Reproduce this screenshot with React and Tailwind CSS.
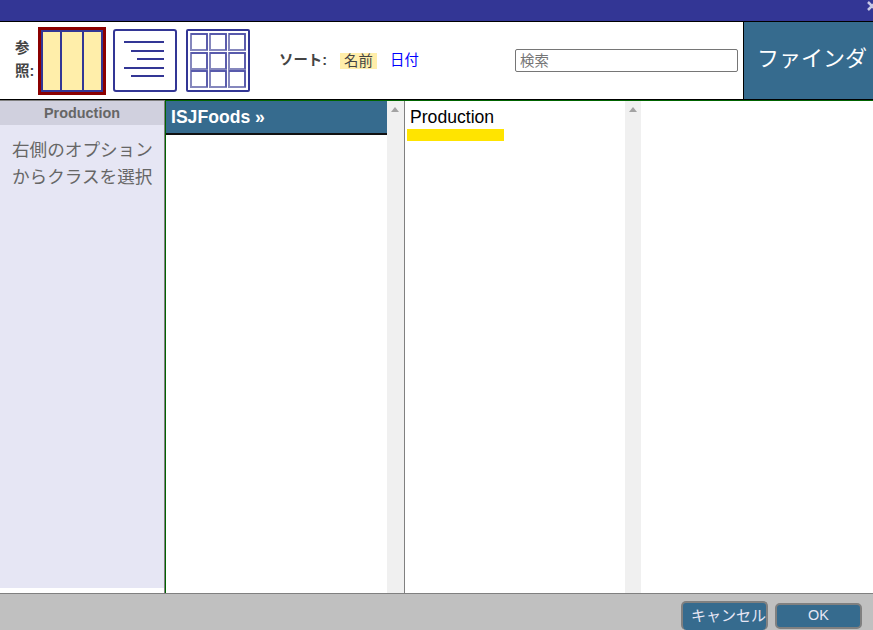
import React from "react";

function ColumnsIcon() {
  return (
    <div className="w-[68px] h-[68px] border-[3px] border-[#8b0000] bg-white shrink-0">
      <svg width="62" height="62" viewBox="0 0 62 62" className="block">
        <rect x="1" y="1" width="60" height="60" fill="#ffeeaa" stroke="#333695" strokeWidth="2" />
        <path d="M20 1V61M42 1V61" stroke="#333695" strokeWidth="2" fill="none" />
      </svg>
    </div>
  );
}

function ListIcon() {
  return (
    <svg width="64" height="64" viewBox="0 0 64 64" className="block shrink-0">
      <rect x="1" y="1" width="62" height="61" rx="2" fill="#fff" stroke="#333695" strokeWidth="2" />
      <path d="M11 13H51M18 22H51M24 30H51M11 39H51M18 47H51" stroke="#333695" strokeWidth="2" fill="none" />
    </svg>
  );
}

function GridIcon() {
  const xs = [4, 23, 42];
  const ys = [4, 23, 41];
  const cells = [];
  ys.forEach((y) => {
    xs.forEach((x) => {
      cells.push(
        <g key={x + "-" + y} fill="none" strokeWidth="2">
          <rect x={x + 1} y={y + 1} width="16" height="16" fill="#fff" stroke="#8587bd" />
          <path d={`M${x + 1} ${y + 1}H${x + 17}V${y + 17}`} stroke="#4a4ca6" strokeWidth="1.400" />
        </g>
      );
    });
  });
  return (
    <svg width="64" height="64" viewBox="0 0 64 64" className="block shrink-0">
      <rect x="1" y="1" width="62" height="61" rx="1" fill="#fff" stroke="#333695" strokeWidth="2" />
      {cells}
    </svg>
  );
}

function Scrollbar({ wide }) {
  return (
    <div className={wide ? "w-[17px] bg-[#f0f0f0] shrink-0 pl-1 pt-[6px]" : "w-4 bg-[#f0f0f0] shrink-0 pl-1 pt-[6px]"}>
      <div className="w-0 h-0 border-l-[4px] border-r-[4px] border-b-[5px] border-l-transparent border-r-transparent border-b-[#a3a3a3]"></div>
    </div>
  );
}

export default function App() {
  return (
    <div className="w-[873px] h-[630px] overflow-hidden flex flex-col bg-white font-['Liberation_Sans','Noto_Sans_CJK_JP',sans-serif]">
      <div className="h-[22px] shrink-0 bg-[#333695] border-b border-black flex justify-end overflow-hidden">
        <svg width="6" height="10" viewBox="0 0 6 10" className="block mt-[1px]">
          <path d="M1 1L9 9M9 1L1 9" stroke="#c9c9e6" strokeWidth="2.500" fill="none" />
        </svg>
      </div>

      <div className="h-[78px] shrink-0 flex items-center border-b border-black">
        <div className="w-[38px] pl-[15px] text-[14.400px] leading-[23px] font-bold text-[#444] text-left shrink-0 mt-[-2px]">
          参照:
        </div>
        <div className="flex items-center shrink-0 mt-px">
          <ColumnsIcon />
          <div className="ml-[7px]"><ListIcon /></div>
          <div className="ml-[9px]"><GridIcon /></div>
        </div>
        <div className="ml-[29px] w-[236px] flex items-center text-[14.400px] shrink-0 mt-px">
          <span className="font-bold text-[#444] w-[61px]">ソート:</span>
          <span className="bg-[#ffeeaa] text-[#444] h-4 leading-4 px-1 w-[37px] whitespace-nowrap">名前</span>
          <span className="ml-[13px] text-[#0000ff]">日付</span>
        </div>
        <input
          className="w-[223px] h-[23px] border border-[#767676] rounded-[2px] px-1 text-[14.400px] shrink-0 placeholder:text-[#757575]"
          placeholder="検索"
        />
        <div className="ml-[5px] w-[130px] h-full shrink-0 bg-[#366b8e] border-l border-black text-white text-[22px] pl-[13px] pb-1 flex items-center whitespace-nowrap">
          ファインダ
        </div>
      </div>

      <div className="flex-1 min-h-0 flex border-b border-b-[#808080]">
        <div className="w-[165px] shrink-0 flex flex-col pb-[5px] border-t border-r border-[#808080]">
          <div className="flex-1 bg-[#e6e6f4]">
            <div className="h-6 bg-[#d0d0de] text-center text-[14.400px] font-bold leading-6 text-[#666]">Production</div>
            <p className="pl-3 pr-1 pt-3 text-[17.600px] leading-[27px] text-[#666]">右側のオプション<br />からクラスを選択</p>
          </div>
        </div>
        <div className="flex-1 flex border-t border-l border-[#006400]">
          <div className="w-[221px] shrink-0">
            <div className="h-[34px] bg-[#366b8e] border-b-2 border-[#111] text-white font-bold text-[17.600px] leading-[32px] pl-[5px]">ISJFoods »</div>
          </div>
          <Scrollbar wide />
          <div className="w-[218px] shrink-0 pl-[2px] pt-[6px] border-l border-[#808080] box-content">
            <div className="pl-[3px] text-black text-[17.600px] leading-[21px]">Production</div>
            <div className="w-[97px] h-3 bg-[#ffe400] mt-[1px]"></div>
          </div>
          <Scrollbar />
          <div className="flex-1"></div>
        </div>
      </div>

      <div className="h-[36px] shrink-0 bg-[#c0c0c0] flex justify-end items-start pt-[7px]">
        <div className="w-[87px] h-[29px] bg-[#366b8e] border-2 border-[#808080] rounded-[5px] border-b-0 text-[#e6e6f4] text-[15px] leading-[26px] whitespace-nowrap pl-2">キャンセル</div>
        <div className="ml-[7px] mr-[11px] mt-[2px] w-[87px] h-[26px] bg-[#366b8e] border-2 border-[#808080] rounded-[5px] text-[#e6e6f4] text-[14.400px] leading-[21px] text-center">OK</div>
      </div>
    </div>
  );
}
